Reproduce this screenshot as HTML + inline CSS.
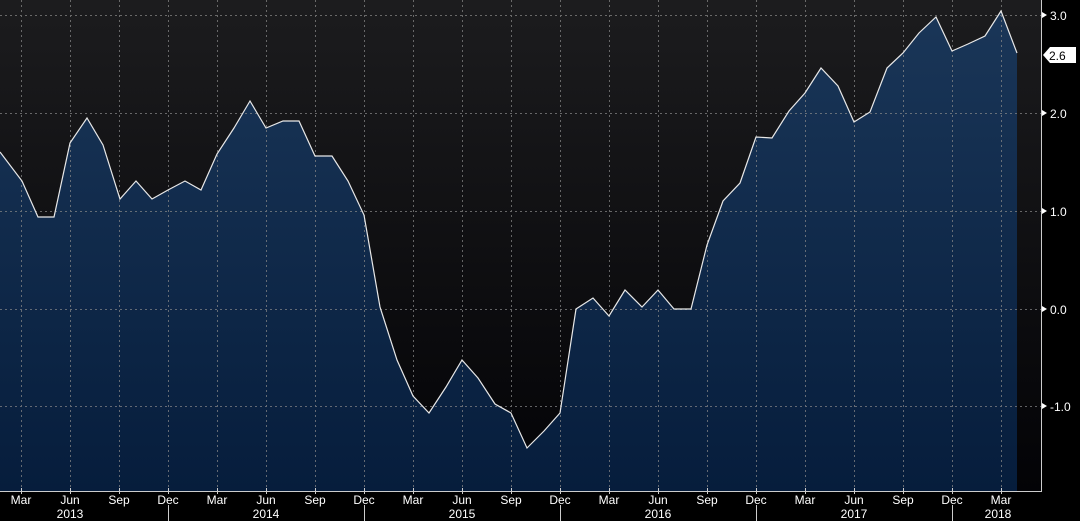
<!DOCTYPE html>
<html><head><style>
html,body{margin:0;padding:0;background:#000;}
svg{display:block}
text{font-family:"Liberation Sans",sans-serif;font-size:12px;fill:#fff}
</style></head><body>
<svg width="1080" height="521" viewBox="0 0 1080 521">
<defs>
<linearGradient id="bg" x1="0" y1="0" x2="0" y2="1">
<stop offset="0" stop-color="#1c1c1e"/><stop offset="1" stop-color="#030306"/>
</linearGradient>
<linearGradient id="fl" x1="0" y1="0" x2="0" y2="1">
<stop offset="0" stop-color="#1a3658"/><stop offset="1" stop-color="#061d3c"/>
</linearGradient>
</defs>
<rect width="1080" height="521" fill="#000"/>
<rect x="0" y="0" width="1041" height="491" fill="url(#bg)"/>
<polygon fill="url(#fl)" points="0,491 0,152 22,181 38,217 54,217 70,143 87,118 103,145 120,199 136,181 152,199 168,190 185,181 201,190 217,154 234,128 250,101 266,128 283,121 299,121 315,156 332,156 348,181 364,215 380,307 397,360 413,396 429,413 446,387 462,360 478,378 495,404 511,413 527,448 544,431 560,413 576,309 593,298 609,316 625,290 642,307 658,290 674,309 691,309 707,245 723,201 740,183 756,137 772,138 789,111 805,93 821,68 838,86 854,122 870,112 887,68 903,53 919,33 936,17 952,51 968,44 985,36 1001,11 1017,53 1017,491"/>
<g stroke="#8a8a8a" stroke-width="1" stroke-dasharray="2,3" opacity="0.7">
<line x1="0" y1="15.5" x2="1041" y2="15.5"/>
<line x1="0" y1="113.5" x2="1041" y2="113.5"/>
<line x1="0" y1="211.5" x2="1041" y2="211.5"/>
<line x1="0" y1="309.5" x2="1041" y2="309.5"/>
<line x1="0" y1="406.5" x2="1041" y2="406.5"/>
<line x1="21.5" y1="0" x2="21.5" y2="491"/><line x1="70.5" y1="0" x2="70.5" y2="491"/><line x1="119.5" y1="0" x2="119.5" y2="491"/><line x1="168.5" y1="0" x2="168.5" y2="491"/><line x1="217.5" y1="0" x2="217.5" y2="491"/><line x1="266.5" y1="0" x2="266.5" y2="491"/><line x1="315.5" y1="0" x2="315.5" y2="491"/><line x1="364.5" y1="0" x2="364.5" y2="491"/><line x1="413.5" y1="0" x2="413.5" y2="491"/><line x1="462.5" y1="0" x2="462.5" y2="491"/><line x1="511.5" y1="0" x2="511.5" y2="491"/><line x1="560.5" y1="0" x2="560.5" y2="491"/><line x1="609.5" y1="0" x2="609.5" y2="491"/><line x1="658.5" y1="0" x2="658.5" y2="491"/><line x1="707.5" y1="0" x2="707.5" y2="491"/><line x1="756.5" y1="0" x2="756.5" y2="491"/><line x1="805.5" y1="0" x2="805.5" y2="491"/><line x1="854.5" y1="0" x2="854.5" y2="491"/><line x1="903.5" y1="0" x2="903.5" y2="491"/><line x1="952.5" y1="0" x2="952.5" y2="491"/><line x1="1001.5" y1="0" x2="1001.5" y2="491"/>
</g>
<polyline fill="none" stroke="#e8e8e8" stroke-width="1.2" points="0,152 22,181 38,217 54,217 70,143 87,118 103,145 120,199 136,181 152,199 168,190 185,181 201,190 217,154 234,128 250,101 266,128 283,121 299,121 315,156 332,156 348,181 364,215 380,307 397,360 413,396 429,413 446,387 462,360 478,378 495,404 511,413 527,448 544,431 560,413 576,309 593,298 609,316 625,290 642,307 658,290 674,309 691,309 707,245 723,201 740,183 756,137 772,138 789,111 805,93 821,68 838,86 854,122 870,112 887,68 903,53 919,33 936,17 952,51 968,44 985,36 1001,11 1017,53"/>
<line x1="0" y1="491.5" x2="1041" y2="491.5" stroke="#ccc"/>
<line x1="1041.5" y1="0" x2="1041.5" y2="492" stroke="#ccc"/>
<g fill="#fff">
<polygon points="1042,12 1047,15 1042,18"/><polygon points="1042,110 1047,113 1042,116"/><polygon points="1042,208 1047,211 1042,214"/><polygon points="1042,306 1047,309 1042,312"/><polygon points="1042,403 1047,406 1042,409"/>
</g>
<text x="1050" y="20">3.0</text><text x="1050" y="118">2.0</text><text x="1050" y="216">1.0</text><text x="1050" y="314">0.0</text><text x="1050" y="411">-1.0</text>
<polygon points="1043,55 1050,47 1076,47 1076,63 1050,63" fill="#fff"/>
<text x="1049" y="60" style="fill:#000">2.6</text>
<g stroke="#ccc">
<line x1="21.5" y1="488" x2="21.5" y2="494"/><line x1="70.5" y1="488" x2="70.5" y2="494"/><line x1="119.5" y1="488" x2="119.5" y2="494"/><line x1="168.5" y1="488" x2="168.5" y2="494"/><line x1="217.5" y1="488" x2="217.5" y2="494"/><line x1="266.5" y1="488" x2="266.5" y2="494"/><line x1="315.5" y1="488" x2="315.5" y2="494"/><line x1="364.5" y1="488" x2="364.5" y2="494"/><line x1="413.5" y1="488" x2="413.5" y2="494"/><line x1="462.5" y1="488" x2="462.5" y2="494"/><line x1="511.5" y1="488" x2="511.5" y2="494"/><line x1="560.5" y1="488" x2="560.5" y2="494"/><line x1="609.5" y1="488" x2="609.5" y2="494"/><line x1="658.5" y1="488" x2="658.5" y2="494"/><line x1="707.5" y1="488" x2="707.5" y2="494"/><line x1="756.5" y1="488" x2="756.5" y2="494"/><line x1="805.5" y1="488" x2="805.5" y2="494"/><line x1="854.5" y1="488" x2="854.5" y2="494"/><line x1="903.5" y1="488" x2="903.5" y2="494"/><line x1="952.5" y1="488" x2="952.5" y2="494"/><line x1="1001.5" y1="488" x2="1001.5" y2="494"/>
<line x1="168.5" y1="505" x2="168.5" y2="521"/><line x1="364.5" y1="505" x2="364.5" y2="521"/><line x1="560.5" y1="505" x2="560.5" y2="521"/><line x1="756.5" y1="505" x2="756.5" y2="521"/><line x1="952.5" y1="505" x2="952.5" y2="521"/>
</g>
<g text-anchor="middle">
<text x="21" y="504">Mar</text><text x="70" y="504">Jun</text><text x="119" y="504">Sep</text><text x="168" y="504">Dec</text>
<text x="217" y="504">Mar</text><text x="266" y="504">Jun</text><text x="315" y="504">Sep</text><text x="364" y="504">Dec</text>
<text x="413" y="504">Mar</text><text x="462" y="504">Jun</text><text x="511" y="504">Sep</text><text x="560" y="504">Dec</text>
<text x="609" y="504">Mar</text><text x="658" y="504">Jun</text><text x="707" y="504">Sep</text><text x="756" y="504">Dec</text>
<text x="805" y="504">Mar</text><text x="854" y="504">Jun</text><text x="903" y="504">Sep</text><text x="952" y="504">Dec</text>
<text x="1001" y="504">Mar</text>
<text x="70" y="518">2013</text><text x="266" y="518">2014</text><text x="462" y="518">2015</text><text x="658" y="518">2016</text><text x="854" y="518">2017</text><text x="998" y="518">2018</text>
</g>
</svg>
</body></html>
